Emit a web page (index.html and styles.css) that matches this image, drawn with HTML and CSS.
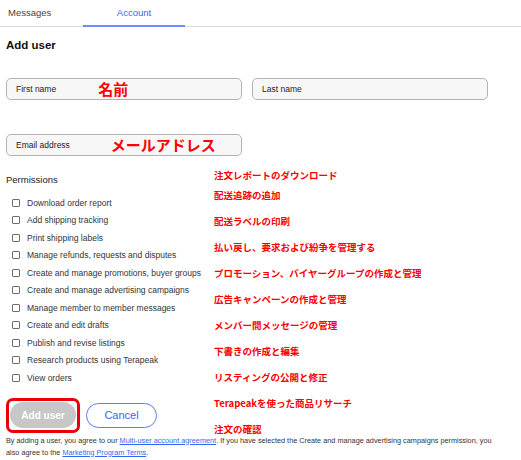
FILE: index.html
```html
<!DOCTYPE html>
<html lang="en">
<head>
<meta charset="utf-8">
<title>Add user</title>
<link rel="stylesheet" href="styles.css">
</head>
<body>
<nav class="tabs">
  <div class="tab">Messages</div>
  <div class="tab tab-active">Account</div>
</nav>
<main class="main">
  <h1 class="title">Add user</h1>
  <div class="name-row">
    <div class="field"><span class="ph">First name</span><span class="note note-name">名前</span></div>
    <div class="field"><span class="ph">Last name</span></div>
  </div>
  <div class="email-row">
    <div class="field"><span class="ph">Email address</span><span class="note note-email">メールアドレス</span></div>
  </div>
  <section class="perm-grid">
    <div class="perm-left">
      <div class="perm-title">Permissions</div>
      <ul class="perm-list">
        <li class="perm"><span class="box"></span>Download order report</li>
        <li class="perm"><span class="box"></span>Add shipping tracking</li>
        <li class="perm"><span class="box"></span>Print shipping labels</li>
        <li class="perm"><span class="box"></span>Manage refunds, requests and disputes</li>
        <li class="perm"><span class="box"></span>Create and manage promotions, buyer groups</li>
        <li class="perm"><span class="box"></span>Create and manage advertising campaigns</li>
        <li class="perm"><span class="box"></span>Manage member to member messages</li>
        <li class="perm"><span class="box"></span>Create and edit drafts</li>
        <li class="perm"><span class="box"></span>Publish and revise listings</li>
        <li class="perm"><span class="box"></span>Research products using Terapeak</li>
        <li class="perm"><span class="box"></span>View orders</li>
      </ul>
      <div class="actions">
        <div class="highlight"><button class="btn-add" type="button">Add user</button></div>
        <button class="btn-cancel" type="button">Cancel</button>
      </div>
    </div>
    <ul class="notes">
      <li class="jn jn-first">注文レポートのダウンロード</li>
      <li class="jn">配送追跡の追加</li>
      <li class="jn">配送ラベルの印刷</li>
      <li class="jn">払い戻し、要求および紛争を管理する</li>
      <li class="jn">プロモーション、バイヤーグループの作成と管理</li>
      <li class="jn">広告キャンペーンの作成と管理</li>
      <li class="jn">メンバー間メッセージの管理</li>
      <li class="jn">下書きの作成と編集</li>
      <li class="jn">リスティングの公開と修正</li>
      <li class="jn">Terapeakを使った商品リサーチ</li>
      <li class="jn">注文の確認</li>
    </ul>
  </section>
  <p class="legal">By adding a user, you agree to our <a href="#">Multi-user account agreement</a>. If you have selected the Create and manage advertising campaigns permission, you also agree to the <a href="#">Marketing Program Terms</a>.</p>
</main>
</body>
</html>
```
FILE: styles.css
```css
* { box-sizing: border-box; }
html, body { margin: 0; padding: 0; background: #fff; }
body {
  font-family: "Liberation Sans", Arial, sans-serif;
  color: #333;
  width: 521px;
  height: 460px;
  overflow: hidden;
}
.tabs {
  display: flex;
  height: 27px;
  border-bottom: 1px solid #d9d9d9;
}
.tab {
  font-size: 9.5px;
  line-height: 26px;
  color: #444;
  width: 83px;
  padding-left: 8px;
}
.tab-active {
  width: 102px;
  padding-left: 0;
  text-align: center;
  color: #3665f3;
  border-bottom: 2px solid #6d8ff5;
  margin-bottom: -1px;
}
.main { padding: 0 6px; }
.title {
  margin: 11px 0 0;
  font-size: 11.5px;
  line-height: 14px;
  font-weight: bold;
  color: #111;
}
.name-row {
  display: flex;
  gap: 10px;
  margin-top: 26px;
}
.email-row { margin-top: 34px; display: flex; }
.field {
  width: 236px;
  height: 22px;
  border: 1px solid #b3b3b3;
  border-radius: 5px;
  background: #f7f7f7;
  display: flex;
  align-items: center;
  padding-left: 9px;
}
.ph { font-size: 8.5px; color: #222; }
.note {
  color: #ff0000;
  font-family: "Noto Sans CJK JP", sans-serif;
  font-weight: bold;
  font-size: 15px;
  line-height: 18px;
}
.note-name { margin-left: 42px; }
.note-email { margin-left: 41px; }
.perm-grid {
  display: grid;
  grid-template-columns: 208px 1fr;
  margin-top: 12px;
  align-items: start;
}
.perm-title {
  padding-top: 6px;
  font-size: 9.5px;
  line-height: 12px;
  color: #222;
}
.perm-list {
  list-style: none;
  margin: 8px 0 0;
  padding: 0 0 0 6px;
}
.perm {
  display: flex;
  align-items: center;
  gap: 7px;
  height: 17.5px;
  font-size: 8.5px;
  color: #333;
}
.box {
  width: 8px;
  height: 8px;
  border: 1px solid #6f6f6f;
  border-radius: 1px;
  flex: none;
}
.actions {
  display: flex;
  align-items: center;
  gap: 6px;
  margin-top: 11px;
}
.highlight {
  border: 3px solid #e8000b;
  border-radius: 7px;
  padding: 1.5px 1px;
  display: flex;
}
.btn-add {
  width: 66px;
  height: 26px;
  border: 0;
  border-radius: 13px;
  background: #c7c7c7;
  color: #fff;
  font-family: "Liberation Sans", Arial, sans-serif;
  font-weight: bold;
  font-size: 10px;
  padding: 0;
}
.btn-cancel {
  width: 71px;
  height: 25px;
  border: 1px solid #5b7ff5;
  border-radius: 13px;
  background: #fff;
  color: #3665f3;
  font-family: "Liberation Sans", Arial, sans-serif;
  font-size: 11px;
  padding: 0;
}
.notes {
  list-style: none;
  margin: 0 0 -12px;
  padding: 0;
}
.jn {
  color: #ff0000;
  font-family: "Noto Sans CJK JP", sans-serif;
  font-weight: bold;
  font-size: 9.5px;
  line-height: 14px;
  height: 14px;
  margin-bottom: 12px;
}
.jn-first { margin-bottom: 6px; }
.legal {
  margin: -1.5px 0 0;
  max-width: 488px;
  font-size: 7.3px;
  line-height: 12px;
  color: #333;
}
.legal a { color: #3665f3; text-decoration: underline; }
```
